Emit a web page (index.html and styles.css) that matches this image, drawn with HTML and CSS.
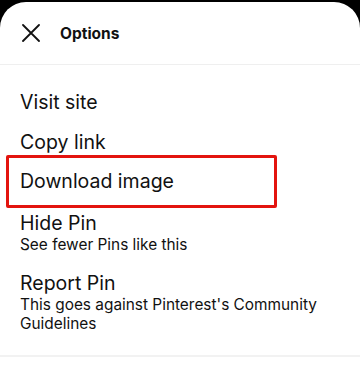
FILE: index.html
```html
<!DOCTYPE html>
<html lang="en">
<head>
    <meta charset="UTF-8">
    <meta name="viewport" content="width=device-width, initial-scale=1.0">
    <title>Options</title>
    <link rel="stylesheet" href="styles.css">
</head>
<body>
    <div class="sheet">
        <div class="header">
            <button class="close-btn" aria-label="Close">
                <svg width="20" height="18" viewBox="0 0 20 18">
                    <path d="M2 1 L18 17 M18 1 L2 17" stroke="#111" stroke-width="1.8" stroke-linecap="round" fill="none"/>
                </svg>
            </button>
            <span class="title">Options</span>
        </div>
        <div class="menu">
            <div class="item">Visit site</div>
            <div class="item">Copy link</div>
            <div class="item highlight">Download image</div>
            <div class="item two-line">
                <div class="item-title">Hide Pin</div>
                <div class="item-sub">See fewer Pins like this</div>
            </div>
            <div class="item two-line">
                <div class="item-title">Report Pin</div>
                <div class="item-sub">This goes against Pinterest's Community Guidelines</div>
            </div>
        </div>
        <div class="footer"></div>
    </div>
</body>
</html>
```

FILE: styles.css
```css
body {
    margin: 0;
    background-color: #000;
    font-family: Inter, "Noto Sans", sans-serif;
    color: #111;
    overflow: hidden;
}
.sheet {
    margin-top: 2px;
    background: #fff;
    border-radius: 26px 26px 0 0;
    height: 372px;
}
.header {
    display: flex;
    align-items: center;
    height: 62px;
    padding: 0 21px;
    border-bottom: 1px solid #efefef;
}
.close-btn {
    background: none;
    border: none;
    padding: 0;
    width: 20px;
    height: 18px;
    display: flex;
    cursor: pointer;
}
.title {
    margin-left: 19px;
    font-size: 15.5px;
    font-weight: 700;
}
.menu {
    padding: 17px 20px 0;
}
.item {
    font-size: 19.5px;
    line-height: 40px;
}
.highlight {
    width: 243px;
    margin: -7px 0 -6px -14px;
    padding: 3px 11px 4px;
    border: 3px solid #e3140f;
    border-radius: 2px;
}
.two-line {
    line-height: normal;
    padding-top: 9px;
}
.two-line + .two-line {
    padding-top: 17px;
}
.item-title {
    font-size: 19.5px;
    line-height: 24px;
}
.item-sub {
    font-size: 15.4px;
    line-height: 19px;
}
.footer {
    margin-top: 22px;
    border-top: 2px solid #f2f2f2;
}
```
